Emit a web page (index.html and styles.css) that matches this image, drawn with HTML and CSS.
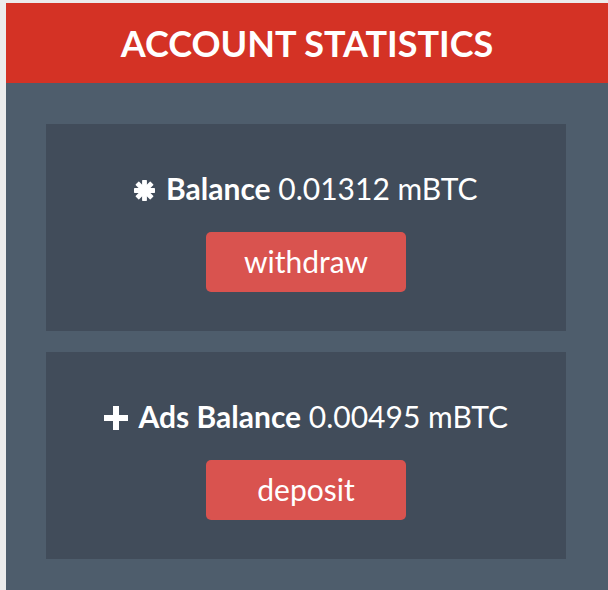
FILE: index.html
```html
<!DOCTYPE html>
<html>
<head>
<meta charset="utf-8">
<link rel="stylesheet" href="styles.css">
</head>
<body>
<div class="panel">
  <div class="panel-head">ACCOUNT STATISTICS</div>
  <div class="panel-body">
    <div class="stat-card">
      <div class="stat-line"><svg class="icon icon-star" viewBox="0 0 20 20"><g fill="#fff"><rect x="7.7" y="0" width="4.6" height="20" rx="0.6"/><rect x="7.7" y="0" width="4.6" height="20" rx="0.6" transform="rotate(45 10 10)"/><rect x="7.7" y="0" width="4.6" height="20" rx="0.6" transform="rotate(90 10 10)"/><rect x="7.7" y="0" width="4.6" height="20" rx="0.6" transform="rotate(135 10 10)"/><circle cx="10" cy="10" r="4.2"/></g></svg> <b>Balance</b> <span>0.01312 mBTC</span></div>
      <button class="btn">withdraw</button>
    </div>
    <div class="stat-card">
      <div class="stat-line"><svg class="icon icon-plus" viewBox="0 0 24 24"><path fill="#fff" d="M9 0h6v9h9v6h-9v9H9v-9H0V9h9z"/></svg> <b>Ads Balance</b> <span>0.00495 mBTC</span></div>
      <button class="btn">deposit</button>
    </div>
  </div>
</div>
</body>
</html>
```
FILE: styles.css
```css
html, body {
  margin: 0;
  padding: 0;
  background: #ececec;
  overflow: hidden;
}
body {
  font-family: Lato, "Open Sans", sans-serif;
}
.panel {
  margin: 3px 0 0 6px;
  width: 602px;
  background: #4e5d6c;
}
.panel-head {
  height: 80px;
  background: #d43225;
  color: #fff;
  font-weight: 700;
  font-size: 36px;
  line-height: 80px;
  text-align: center;
  box-sizing: border-box;
  padding: 0 0 6px 0;
}
.panel-body {
  padding: 41px 42px 40px 40px;
  display: flex;
  flex-direction: column;
  gap: 21px;
}
.stat-card {
  background: #414c5a;
  height: 207px;
  box-sizing: border-box;
  display: flex;
  flex-direction: column;
  align-items: center;
  padding-top: 46px;
}
.stat-line {
  color: #fff;
  font-size: 30px;
  line-height: 36px;
  white-space: nowrap;
}
.stat-line b {
  font-weight: 700;
}
.icon {
  display: inline-block;
  margin-right: 3px;
}
.icon-star {
  width: 21px;
  height: 21px;
  vertical-align: -1px;
}
.icon-plus {
  width: 24px;
  height: 24px;
  vertical-align: -2px;
}
.btn {
  margin-top: 26px;
  width: 200px;
  height: 60px;
  border: 0;
  border-radius: 5px;
  background: #d9534f;
  color: #fff;
  font-family: Lato, sans-serif;
  font-size: 30px;
  padding: 0 0 3px;
}
```
